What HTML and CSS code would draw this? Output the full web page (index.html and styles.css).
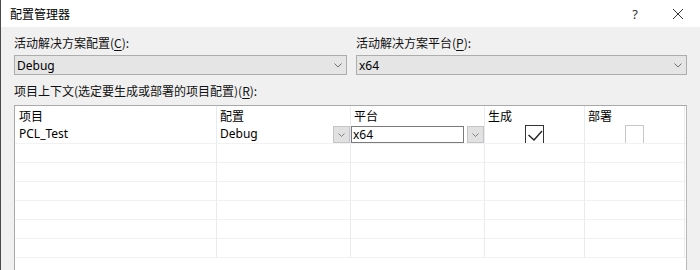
FILE: index.html
```html
<!DOCTYPE html>
<html lang="zh-CN">
<head>
<meta charset="utf-8">
<title>配置管理器</title>
<link rel="stylesheet" href="styles.css">
</head>
<body>
<div class="window">
  <div class="titlebar">
    <span class="title">配置管理器</span>
    <span class="help">?</span>
    <span class="close"><svg width="12" height="12" viewBox="0 0 12 12"><path d="M1 1 L11 11 M11 1 L1 11" stroke="#333" stroke-width="1" fill="none"/></svg></span>
  </div>
  <div class="content">
    <div class="config-row">
      <div class="field">
        <div class="label">活动解决方案配置(<u>C</u>):</div>
        <div class="combo"><span>Debug</span><svg class="chev" width="8" height="5" viewBox="0 0 8 5"><path d="M0.5 0.5 L4 4 L7.5 0.5" stroke="#707070" fill="none"/></svg></div>
      </div>
      <div class="field">
        <div class="label">活动解决方案平台(<u>P</u>):</div>
        <div class="combo"><span>x64</span><svg class="chev" width="8" height="5" viewBox="0 0 8 5"><path d="M0.5 0.5 L4 4 L7.5 0.5" stroke="#707070" fill="none"/></svg></div>
      </div>
    </div>
    <div class="label label-ctx">项目上下文(选定要生成或部署的项目配置)(<u>R</u>):</div>
    <div class="grid">
      <div class="hcell c1">项目</div>
      <div class="hcell">配置</div>
      <div class="hcell">平台</div>
      <div class="hcell">生成</div>
      <div class="hcell">部署</div>
      <div class="hcell last"></div>

      <div class="cell c1">PCL_Test</div>
      <div class="cell cfg"><span>Debug</span><span class="dbtn"><svg width="7" height="4" viewBox="0 0 7 4"><path d="M0.5 0.5 L3.5 3.5 L6.5 0.5" stroke="#808080" fill="none"/></svg></span></div>
      <div class="cell plat"><span class="edit">x64</span><span class="dbtn"><svg width="7" height="4" viewBox="0 0 7 4"><path d="M0.5 0.5 L3.5 3.5 L6.5 0.5" stroke="#808080" fill="none"/></svg></span></div>
      <div class="cell chk"><span class="box on"><svg width="18" height="18" viewBox="0 0 18 18"><path d="M2.5 9 L8 14 L16 5" stroke="#222" stroke-width="1.4" fill="none"/></svg></span></div>
      <div class="cell chk"><span class="box"></span></div>
      <div class="cell last"></div>

      <div class="cell c1"></div><div class="cell"></div><div class="cell"></div><div class="cell"></div><div class="cell"></div><div class="cell last"></div>
      <div class="cell c1"></div><div class="cell"></div><div class="cell"></div><div class="cell"></div><div class="cell"></div><div class="cell last"></div>
      <div class="cell c1"></div><div class="cell"></div><div class="cell"></div><div class="cell"></div><div class="cell"></div><div class="cell last"></div>
      <div class="cell c1"></div><div class="cell"></div><div class="cell"></div><div class="cell"></div><div class="cell"></div><div class="cell last"></div>
      <div class="cell c1"></div><div class="cell"></div><div class="cell"></div><div class="cell"></div><div class="cell"></div><div class="cell last"></div>
      <div class="cell c1"></div><div class="cell"></div><div class="cell"></div><div class="cell"></div><div class="cell"></div><div class="cell last"></div>
    </div>
  </div>
</div>
</body>
</html>
```
FILE: styles.css
```css
html, body {
  margin: 0;
  padding: 0;
  width: 700px;
  height: 270px;
  overflow: hidden;
  background: #f0f0f0;
}
.window {
  height: 270px;
  overflow: hidden;
  border-left: 1px solid #4a4a4a;
  font-family: "Noto Sans", "Noto Sans CJK SC", sans-serif;
  font-size: 12px;
  color: #000;
  box-sizing: border-box;
}
.titlebar {
  height: 27px;
  background: #fff;
  display: flex;
  align-items: center;
}
.title {
  padding-left: 9px;
  flex: 1;
  font-family: "Noto Sans CJK SC", sans-serif;
}
.help {
  width: 14px;
  text-align: center;
  color: #333;
  font-size: 13px;
  margin-right: 30px;
}
.close {
  display: flex;
  margin-right: 16px;
}
.content {
  padding: 0 13px 0 13px;
}
.config-row {
  display: grid;
  grid-template-columns: 333px 331px;
  column-gap: 9px;
}
.label {
  line-height: 16px;
  padding-top: 8px;
  font-family: "Noto Sans CJK SC", sans-serif;
  color: #111;
}
.label u {
  text-underline-offset: 2px;
}
.combo {
  margin-top: 4px;
  height: 20px;
  box-sizing: border-box;
  border: 1px solid #adadad;
  background: #e5e5e5;
  display: flex;
  align-items: center;
  justify-content: space-between;
  padding: 0 4px 0 2px;
}
.label-ctx {
  padding-top: 8px;
}
.grid {
  margin-top: 6px;
  border: 1px solid #a9a9a9;
  border-bottom: none;
  border-right-color: #b8b8b8;
  background: #fff;
  display: grid;
  grid-template-columns: 202px 134px 134px 100px 100px 1fr;
  grid-auto-rows: 19px;
  height: 164px;
  overflow: hidden;
}
.hcell, .cell {
  box-sizing: border-box;
  border-right: 1px solid #e6ecf2;
  padding-left: 3px;
  line-height: 18px;
  overflow: hidden;
  white-space: nowrap;
  position: relative;
}
.hcell {
  height: 20px;
  line-height: 20px;
  font-family: "Noto Sans CJK SC", sans-serif;
}
.cell {
  border-bottom: 1px solid #f2f2f2;
}
.c1 {
  padding-left: 4px;
}
.last {
  border-right: none;
}
.cfg {
  display: flex;
  align-items: flex-start;
  justify-content: space-between;
  padding-right: 0;
}
.dbtn {
  margin-top: 1px;
  width: 17px;
  height: 17px;
  box-sizing: border-box;
  border: 1px solid #c4c4c4;
  background: #e1e1e1;
  display: flex;
  align-items: center;
  justify-content: center;
}
.plat {
  display: flex;
  align-items: flex-start;
  padding-left: 0;
  gap: 3px;
}
.edit {
  margin-top: 1px;
  width: 113px;
  height: 17px;
  box-sizing: border-box;
  border: 1px solid #7a7a7a;
  background: #fff;
  line-height: 15px;
  padding-left: 1px;
}
.chk {
  display: flex;
  justify-content: center;
  padding-left: 0;
}
.box {
  width: 19px;
  height: 24px;
  box-sizing: border-box;
  border: 1px solid #c8c8c8;
  flex: none;
}
.box.on {
  border-color: #333;
}
.box svg {
  display: block;
}
```
